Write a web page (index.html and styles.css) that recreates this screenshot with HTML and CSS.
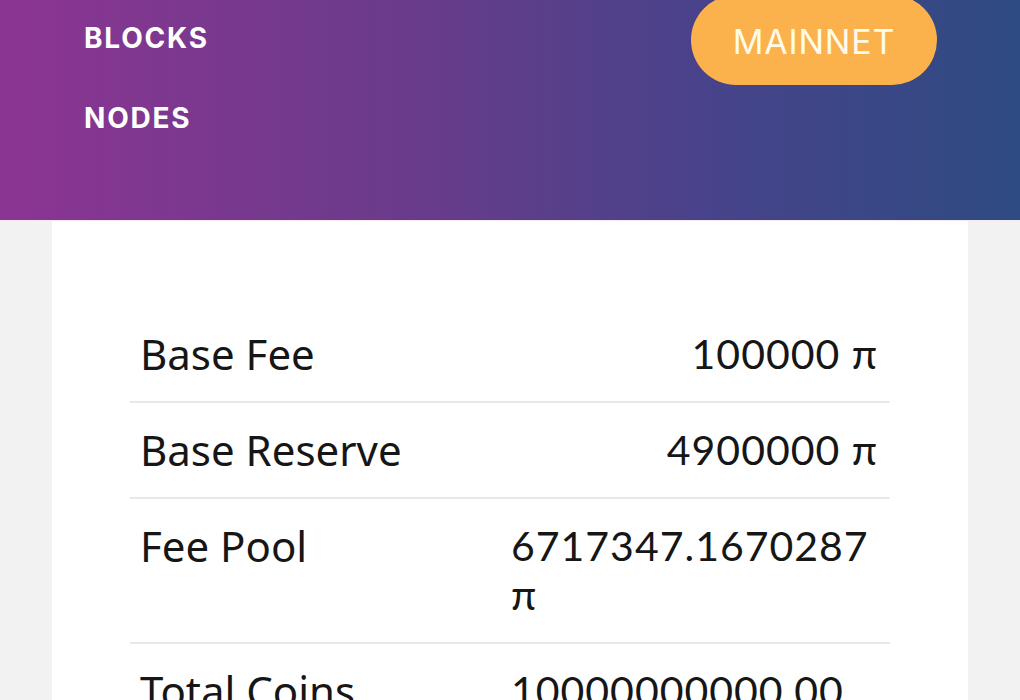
FILE: index.html
```html
<!DOCTYPE html>
<html lang="en">
<head>
<meta charset="utf-8">
<title>Pi Explorer</title>
<link rel="stylesheet" href="styles.css">
</head>
<body>
<header class="topbar">
  <nav class="menu">
    <a class="menu-link" href="#">BLOCKS</a>
    <a class="menu-link" href="#">NODES</a>
  </nav>
  <button class="net-btn">MAINNET</button>
</header>
<main class="page">
  <section class="card">
    <div class="stats">
      <div class="row">
        <div class="label">Base Fee</div>
        <div class="value"><span>100000 π</span></div>
      </div>
      <div class="row">
        <div class="label">Base Reserve</div>
        <div class="value"><span>4900000 π</span></div>
      </div>
      <div class="row">
        <div class="label">Fee Pool</div>
        <div class="value"><span>6717347.1670287 π</span></div>
      </div>
      <div class="row">
        <div class="label">Total Coins</div>
        <div class="value"><span>10000000000.00 π</span></div>
      </div>
    </div>
  </section>
</main>
</body>
</html>
```

FILE: styles.css
```css
html, body {
  margin: 0;
  padding: 0;
}
body {
  background: #f2f2f2;
  font-family: Lato, "Noto Sans", sans-serif;
  color: #161616;
  overflow: hidden;
}
.topbar {
  height: 221px;
  background: linear-gradient(90deg, #8b3592 0%, #6a3b8a 40%, #47438a 70%, #2e4b82 100%);
  display: flex;
  justify-content: space-between;
  align-items: flex-start;
  padding: 0 83px 0 84px;
  box-sizing: border-box;
  border-bottom: 1px solid #f6e9f4;
}
.menu {
  display: flex;
  flex-direction: column;
  gap: 46px;
  padding-top: 21px;
}
.menu-link {
  color: #ffffff;
  text-decoration: none;
  font-family: Inter, "Open Sans", sans-serif;
  font-weight: 700;
  font-size: 28px;
  line-height: 34px;
  letter-spacing: 1.8px;
}
.net-btn {
  margin-top: -5px;
  width: 246px;
  height: 90px;
  border: none;
  border-radius: 45px;
  background: #fbb24c;
  color: #fffbea;
  font-family: Inter, "Open Sans", sans-serif;
  font-weight: 400;
  font-size: 34px;
  letter-spacing: 0.8px;
  padding: 2px 0 0;
}
.page {
  padding: 0 52px;
}
.card {
  background: #ffffff;
  padding: 86px 78px 40px;
  min-height: 600px;
}
.stats {
  display: flex;
  flex-direction: column;
}
.row {
  display: grid;
  grid-template-columns: 369px 1fr;
  border-top: 2px solid #e8e8e8;
}
.row:first-child {
  border-top: none;
}
.label, .value {
  padding: 22px 12px 23px;
  font-size: 41px;
  line-height: 49px;
}
.label {
  font-family: "Noto Sans", Lato, sans-serif;
  font-size: 42px;
  padding-left: 10px;
}
.value {
  display: flex;
  justify-content: flex-end;
  letter-spacing: 1px;
}
.value span {
  text-align: left;
}
```
